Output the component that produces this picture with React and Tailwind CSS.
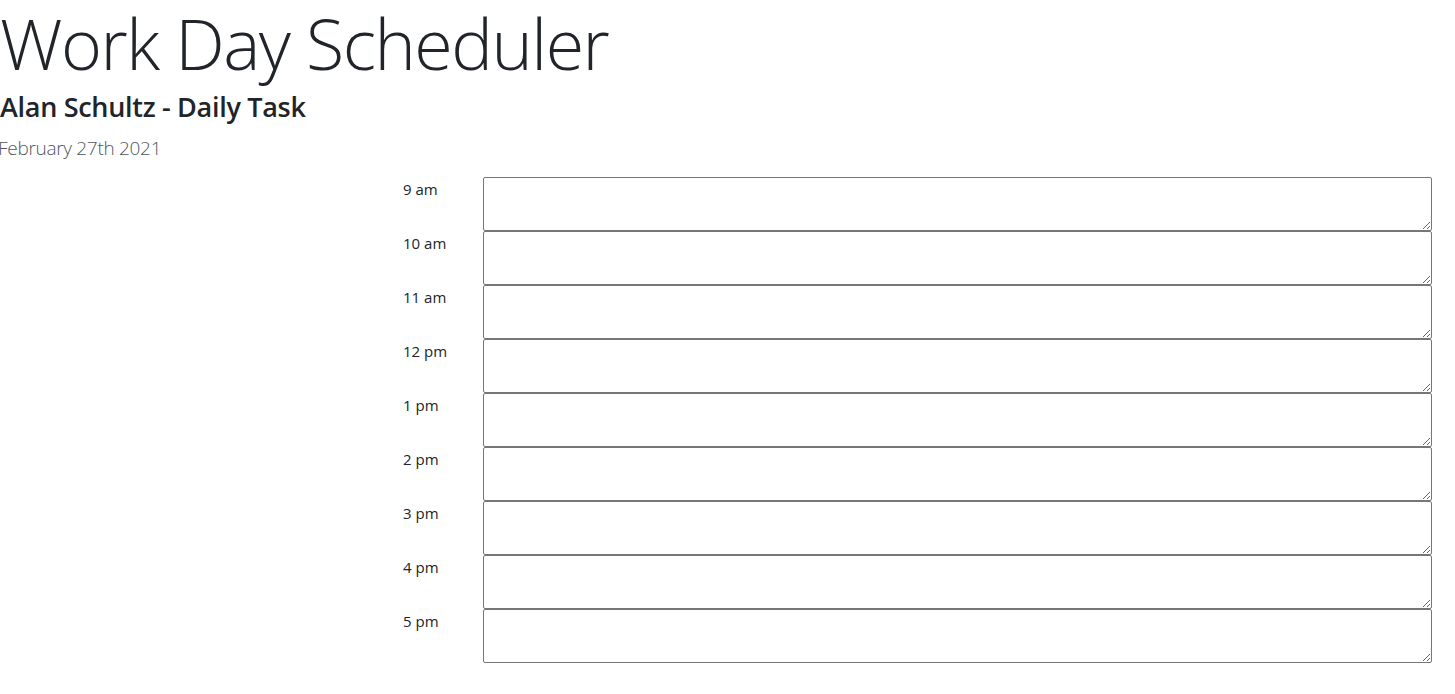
import { useState } from 'react';

const hours = ['9 am', '10 am', '11 am', '12 pm', '1 pm', '2 pm', '3 pm', '4 pm', '5 pm'];

export default function App() {
  const [tasks, setTasks] = useState(() => hours.map(() => ''));

  const updateTask = (i, value) => {
    setTasks((prev) => prev.map((t, j) => (j === i ? value : t)));
  };

  return (
    <div className="min-h-screen bg-white text-[#212529] font-['Open_Sans',sans-serif]">
      {/* Header */}
      <header>
        <h1 className="text-[70px] leading-[86px] font-light tracking-[-1.5px]">Work Day Scheduler</h1>
        <h2 className="mt-[4px] text-[27px] leading-[34px] font-semibold tracking-[-0.3px]">Alan Schultz - Daily Task</h2>
        <p className="mt-[11px] text-[19px] leading-[26px] font-light text-[#51575d] tracking-[-0.3px] -ml-[2px]">February 27th 2021</p>
      </header>

      {/* Time blocks */}
      <div className="mt-[16px] ml-[403px] mr-[23px] flex flex-col">
        {hours.map((hour, i) => (
          <div key={hour} className="flex">
            <div className="w-[80px] pt-[2px] text-[15px] leading-[20px]">{hour}</div>
            <textarea
              value={tasks[i]}
              onChange={(e) => updateTask(i, e.target.value)}
              className="flex-1 h-[54px] border border-[#767676] rounded-[2px] bg-white px-1 text-[14px]"
            />
          </div>
        ))}
      </div>
    </div>
  );
}
